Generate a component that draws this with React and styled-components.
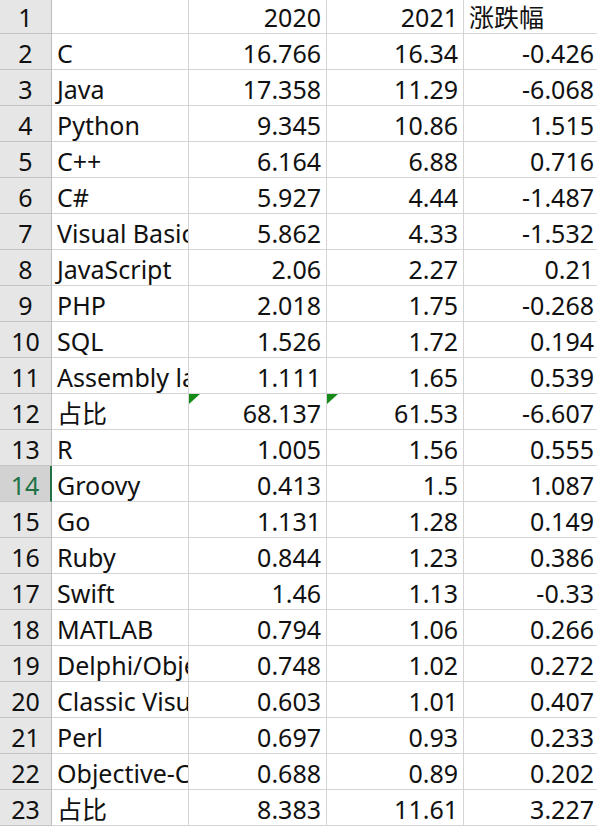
import styled, { createGlobalStyle } from "styled-components"

const GlobalStyle = createGlobalStyle`
  html, body {
    margin: 0;
    padding: 0;
    background: #ffffff;
    overflow: hidden;
  }
  body {
    font-family: "Noto Sans", "Noto Sans CJK SC", sans-serif;
  }
`

const Sheet = styled.div`
  display: grid;
  grid-template-columns: 52px 137px 138px 137px 136px;
  grid-auto-rows: 36px;
  grid-template-rows: 34px;
  width: 600px;
  color: #111;
  font-size: 25px;
  line-height: 1;
`

const RowHead = styled.div`
  display: flex;
  align-items: flex-end;
  justify-content: center;
  padding-bottom: 3px;
  box-sizing: border-box;
  background: ${(p) => (p.$active ? "#d2d2d2" : "#e6e6e6")};
  color: ${(p) => (p.$active ? "#217346" : "#111")};
  border-bottom: 1px solid #c4c4c4;
  border-right: ${(p) => (p.$active ? "2px solid #217346" : "1px solid #bdbdbd")};
`

const Cell = styled.div`
  position: relative;
  display: flex;
  align-items: flex-end;
  justify-content: ${(p) => (p.$num ? "flex-end" : "flex-start")};
  padding: 0 ${(p) => (p.$num ? "5px" : "0")} 3px ${(p) => (p.$num ? "0" : "5px")};
  box-sizing: border-box;
  border-bottom: 1px solid #d4d4d4;
  border-right: 1px solid #d4d4d4;
  white-space: nowrap;
  overflow: hidden;
`

const Flag = styled.span`
  position: absolute;
  top: 0;
  left: 0;
  width: 0;
  height: 0;
  border-top: 10px solid #168a16;
  border-right: 11px solid transparent;
`

const rows = [
  ["", "2020", "2021", "涨跌幅"],
  ["C", "16.766", "16.34", "-0.426"],
  ["Java", "17.358", "11.29", "-6.068"],
  ["Python", "9.345", "10.86", "1.515"],
  ["C++", "6.164", "6.88", "0.716"],
  ["C#", "5.927", "4.44", "-1.487"],
  ["Visual Basic", "5.862", "4.33", "-1.532"],
  ["JavaScript", "2.06", "2.27", "0.21"],
  ["PHP", "2.018", "1.75", "-0.268"],
  ["SQL", "1.526", "1.72", "0.194"],
  ["Assembly language", "1.111", "1.65", "0.539"],
  ["占比", "68.137", "61.53", "-6.607", true],
  ["R", "1.005", "1.56", "0.555"],
  ["Groovy", "0.413", "1.5", "1.087"],
  ["Go", "1.131", "1.28", "0.149"],
  ["Ruby", "0.844", "1.23", "0.386"],
  ["Swift", "1.46", "1.13", "-0.33"],
  ["MATLAB", "0.794", "1.06", "0.266"],
  ["Delphi/Object Pascal", "0.748", "1.02", "0.272"],
  ["Classic Visual Basic", "0.603", "1.01", "0.407"],
  ["Perl", "0.697", "0.93", "0.233"],
  ["Objective-C", "0.688", "0.89", "0.202"],
  ["占比", "8.383", "11.61", "3.227"],
]

export default function App() {
  return (
    <>
      <GlobalStyle />
      <Sheet>
        {rows.map((r, i) => {
          const [name, a, b, c, flag] = r
          return [
            <RowHead key={`h${i}`} $active={i === 13}>{i + 1}</RowHead>,
            <Cell key={`a${i}`}>{name}</Cell>,
            <Cell key={`b${i}`} $num>{flag && <Flag />}{a}</Cell>,
            <Cell key={`c${i}`} $num>{flag && <Flag />}{b}</Cell>,
            <Cell key={`d${i}`} $num={i !== 0}>{c}</Cell>,
          ]
        })}
      </Sheet>
    </>
  )
}
